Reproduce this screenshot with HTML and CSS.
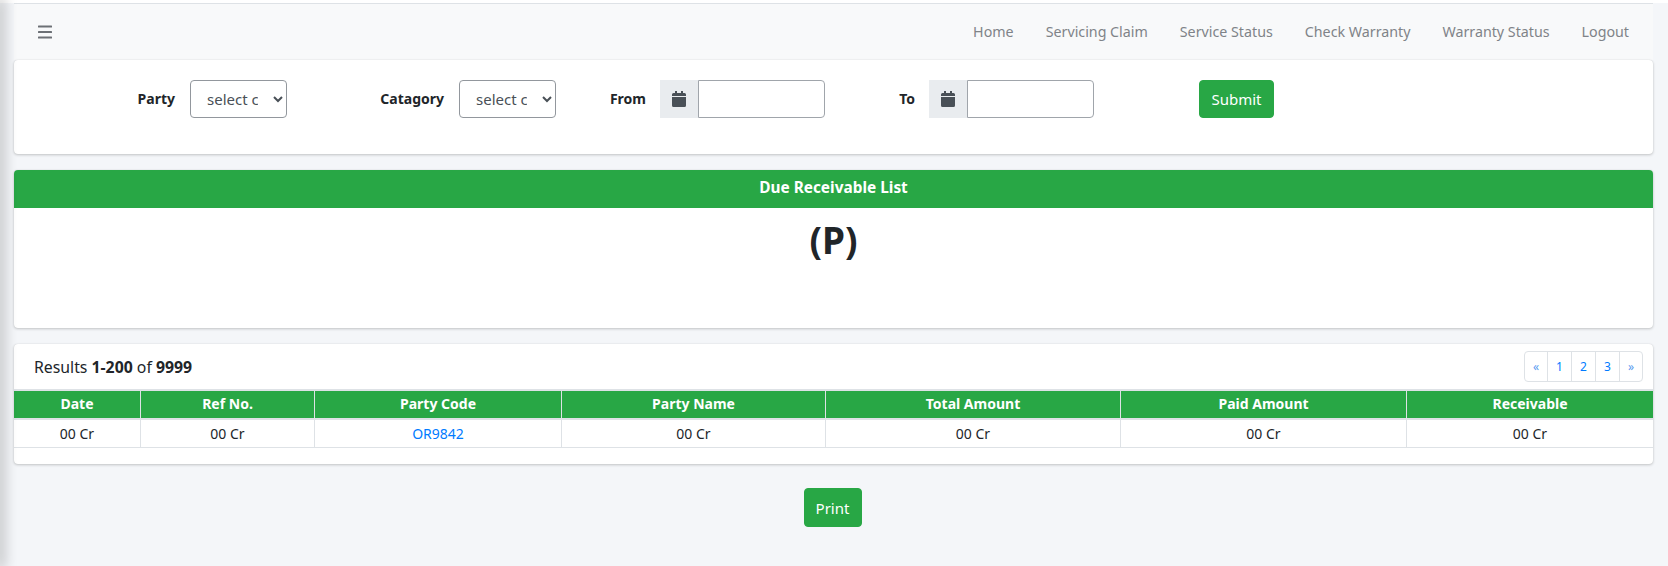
FILE: index.html
```html
<!DOCTYPE html>
<html lang="en">
<head>
<meta charset="UTF-8">
<meta name="viewport" content="width=device-width, initial-scale=1.0">
<title>Due Receivable List</title>
<link rel="stylesheet" href="styles.css">
</head>
<body>
  <div class="side-shadow"></div>
  <div class="wrapper">
    <nav class="topbar">
      <a class="menu-toggle" href="#">
        <svg width="14" height="14" viewBox="0 0 14 14" fill="#6c7075"><rect y="0.5" width="14" height="2" rx="0.5"/><rect y="6" width="14" height="2" rx="0.5"/><rect y="11.5" width="14" height="2" rx="0.5"/></svg>
      </a>
      <ul class="nav-links">
        <li><a href="#">Home</a></li>
        <li><a href="#">Servicing Claim</a></li>
        <li><a href="#">Service Status</a></li>
        <li><a href="#">Check Warranty</a></li>
        <li><a href="#">Warranty Status</a></li>
        <li><a href="#">Logout</a></li>
      </ul>
    </nav>

    <form class="card filter-card">
      <label class="lbl lbl-party" for="party">Party</label>
      <select class="field" id="party"><option>select category</option></select>
      <label class="lbl lbl-cat" for="category">Catagory</label>
      <select class="field" id="category"><option>select category</option></select>
      <label class="lbl lbl-date" for="from">From</label>
      <div class="date-group">
        <span class="addon">
          <svg width="14" height="16" viewBox="0 0 14 16" fill="#495057"><path d="M3 0h2v2H3zM9 0h2v2H9zM0 3.5A1.5 1.5 0 0 1 1.5 2h11A1.5 1.5 0 0 1 14 3.5V5H0zM0 6h14v8.5a1.5 1.5 0 0 1-1.5 1.5h-11A1.5 1.5 0 0 1 0 14.5z"/></svg>
        </span>
        <input class="date-input" id="from" type="text">
      </div>
      <label class="lbl lbl-date" for="to">To</label>
      <div class="date-group">
        <span class="addon">
          <svg width="14" height="16" viewBox="0 0 14 16" fill="#495057"><path d="M3 0h2v2H3zM9 0h2v2H9zM0 3.5A1.5 1.5 0 0 1 1.5 2h11A1.5 1.5 0 0 1 14 3.5V5H0zM0 6h14v8.5a1.5 1.5 0 0 1-1.5 1.5h-11A1.5 1.5 0 0 1 0 14.5z"/></svg>
        </span>
        <input class="date-input" id="to" type="text">
      </div>
      <button class="btn btn-submit" type="button">Submit</button>
    </form>

    <section class="card title-card">
      <div class="card-head">Due Receivable List</div>
      <h2 class="party-name">(P)</h2>
    </section>

    <section class="card results-card">
      <div class="results-bar">
        <span class="results-text">Results <b>1-200</b> of <b>9999</b></span>
        <ul class="pager">
          <li class="arrow"><a href="#">«</a></li>
          <li><a href="#">1</a></li>
          <li><a href="#">2</a></li>
          <li><a href="#">3</a></li>
          <li class="arrow"><a href="#">»</a></li>
        </ul>
      </div>
      <table class="due-table">
        <thead>
          <tr>
            <th>Date</th>
            <th>Ref No.</th>
            <th>Party Code</th>
            <th>Party Name</th>
            <th>Total Amount</th>
            <th>Paid Amount</th>
            <th>Receivable</th>
          </tr>
        </thead>
        <tbody>
          <tr>
            <td>00 Cr</td>
            <td>00 Cr</td>
            <td><a href="#">OR9842</a></td>
            <td>00 Cr</td>
            <td>00 Cr</td>
            <td>00 Cr</td>
            <td>00 Cr</td>
          </tr>
        </tbody>
      </table>
    </section>

    <div class="print-row">
      <button class="btn" type="button">Print</button>
    </div>
  </div>
</body>
</html>
```

FILE: styles.css
```css
* {
  box-sizing: border-box;
}

html,
body {
  height: 100%;
}

body {
  margin: 0;
  background-color: #f4f6f9;
  color: #212529;
  font-family: "Noto Sans", sans-serif;
  font-size: 14px;
  line-height: 24px;
  overflow: hidden;
}

a {
  color: #007bff;
  text-decoration: none;
}

/* shadow thrown by the collapsed sidebar */
.side-shadow {
  position: fixed;
  top: 0;
  bottom: 0;
  left: -1px;
  width: 1px;
  box-shadow: 0 0 14px 3px rgba(0, 0, 0, 0.32);
}

.wrapper {
  padding: 3px 15px 0 14px;
  min-height: 100%;
  background: linear-gradient(#fff 3px, transparent 3px);
}

/* top bar */
.topbar {
  display: flex;
  align-items: center;
  justify-content: space-between;
  height: 57px;
  padding: 0 8px 0 24px;
  background-color: #f8f9fa;
  border-top: 1px solid #dee2e6;
}

.menu-toggle {
  display: flex;
}

.nav-links {
  display: flex;
  margin: 0;
  padding: 0;
  list-style: none;
  font-size: 14.25px;
}

.nav-links a {
  display: block;
  padding: 0 16px;
  color: #7f8388;
}

/* cards */
.card {
  background-color: #fff;
  border-radius: 4px;
  box-shadow: 0 0 1px rgba(0, 0, 0, 0.125), 0 1px 3px rgba(0, 0, 0, 0.2);
  margin-bottom: 16px;
}

.filter-card {
  display: flex;
  height: 94px;
  padding-top: 20px;
}

.lbl {
  height: 38px;
  line-height: 38px;
  font-weight: 700;
  text-align: right;
}

.lbl-party {
  width: 161px;
  margin-right: 15px;
}

.lbl-cat {
  width: 157px;
  margin-right: 15px;
}

.lbl-date {
  width: 90px;
  margin-right: 14px;
}

.field {
  width: 97px;
  height: 38px;
  padding: 6px 12px;
  background-color: #fff;
  border: 1px solid #92979d;
  border-radius: 4px;
  color: #495057;
  font-family: inherit;
  font-size: 15px;
}

.date-group {
  display: flex;
  height: 38px;
}

.addon {
  display: flex;
  align-items: center;
  justify-content: center;
  width: 38px;
  background-color: #e9ecef;
}

.date-input {
  width: 127px;
  height: 38px;
  border: 1px solid #a0a5ab;
  border-radius: 0 4px 4px 0;
}

.btn {
  height: 38px;
  padding: 0;
  background-color: #28a745;
  border: 1px solid #28a745;
  border-radius: 4px;
  color: #fff;
  font-family: inherit;
  font-size: 15px;
}

.btn-submit {
  width: 75px;
  margin-left: 105px;
}

.title-card {
  height: 158px;
}

.card-head {
  height: 38px;
  padding-top: 6px;
  background-color: #28a745;
  border-radius: 4px 4px 0 0;
  color: #fff;
  font-size: 15.4px;
  font-weight: 700;
  text-align: center;
}

.party-name {
  margin: 0;
  padding-top: 11px;
  font-size: 37px;
  line-height: 42px;
  font-weight: 700;
  text-align: center;
}

/* results */
.results-card {
  height: 120px;
  margin-bottom: 24px;
}

.results-bar {
  display: flex;
  align-items: center;
  justify-content: space-between;
  height: 45px;
  padding: 0 10px 0 20px;
}

.results-text {
  font-size: 15.8px;
}

.pager {
  display: flex;
  margin: 0;
  padding: 0;
  list-style: none;
  border: 1px solid #dee2e6;
  border-radius: 4px;
  font-size: 12px;
  line-height: 29px;
}

.pager li {
  width: 24px;
  text-align: center;
  border-left: 1px solid #dee2e6;
}

.pager li:first-child {
  border-left: none;
}

.pager .arrow {
  width: 23px;
}

.pager .arrow:first-child {
  width: 22px;
}

.pager .arrow a {
  color: #5a9bf0;
}

.due-table {
  width: 100%;
  border-collapse: separate;
  border-spacing: 0;
  table-layout: fixed;
  text-align: center;
}

.due-table th:nth-child(1) { width: 126px; }
.due-table th:nth-child(2) { width: 174px; }
.due-table th:nth-child(3) { width: 247px; }
.due-table th:nth-child(4) { width: 264px; }
.due-table th:nth-child(5) { width: 295px; }
.due-table th:nth-child(6) { width: 286px; }

.due-table th {
  height: 31px;
  padding: 0 0 2px;
  background-color: #28a745;
  border-top: 2px solid #dee2e6;
  border-bottom: 2px solid #dee2e6;
  border-left: 1px solid #dee2e6;
  color: #fff;
  font-weight: 700;
}

.due-table td {
  height: 28px;
  padding: 0;
  border-left: 1px solid #dee2e6;
  border-bottom: 1px solid #dee2e6;
}

.due-table th:first-child,
.due-table td:first-child {
  border-left: none;
}

.print-row {
  display: flex;
  justify-content: center;
  padding-right: 2px;
}

.print-row .btn {
  width: 58px;
  height: 39px;
}
```
